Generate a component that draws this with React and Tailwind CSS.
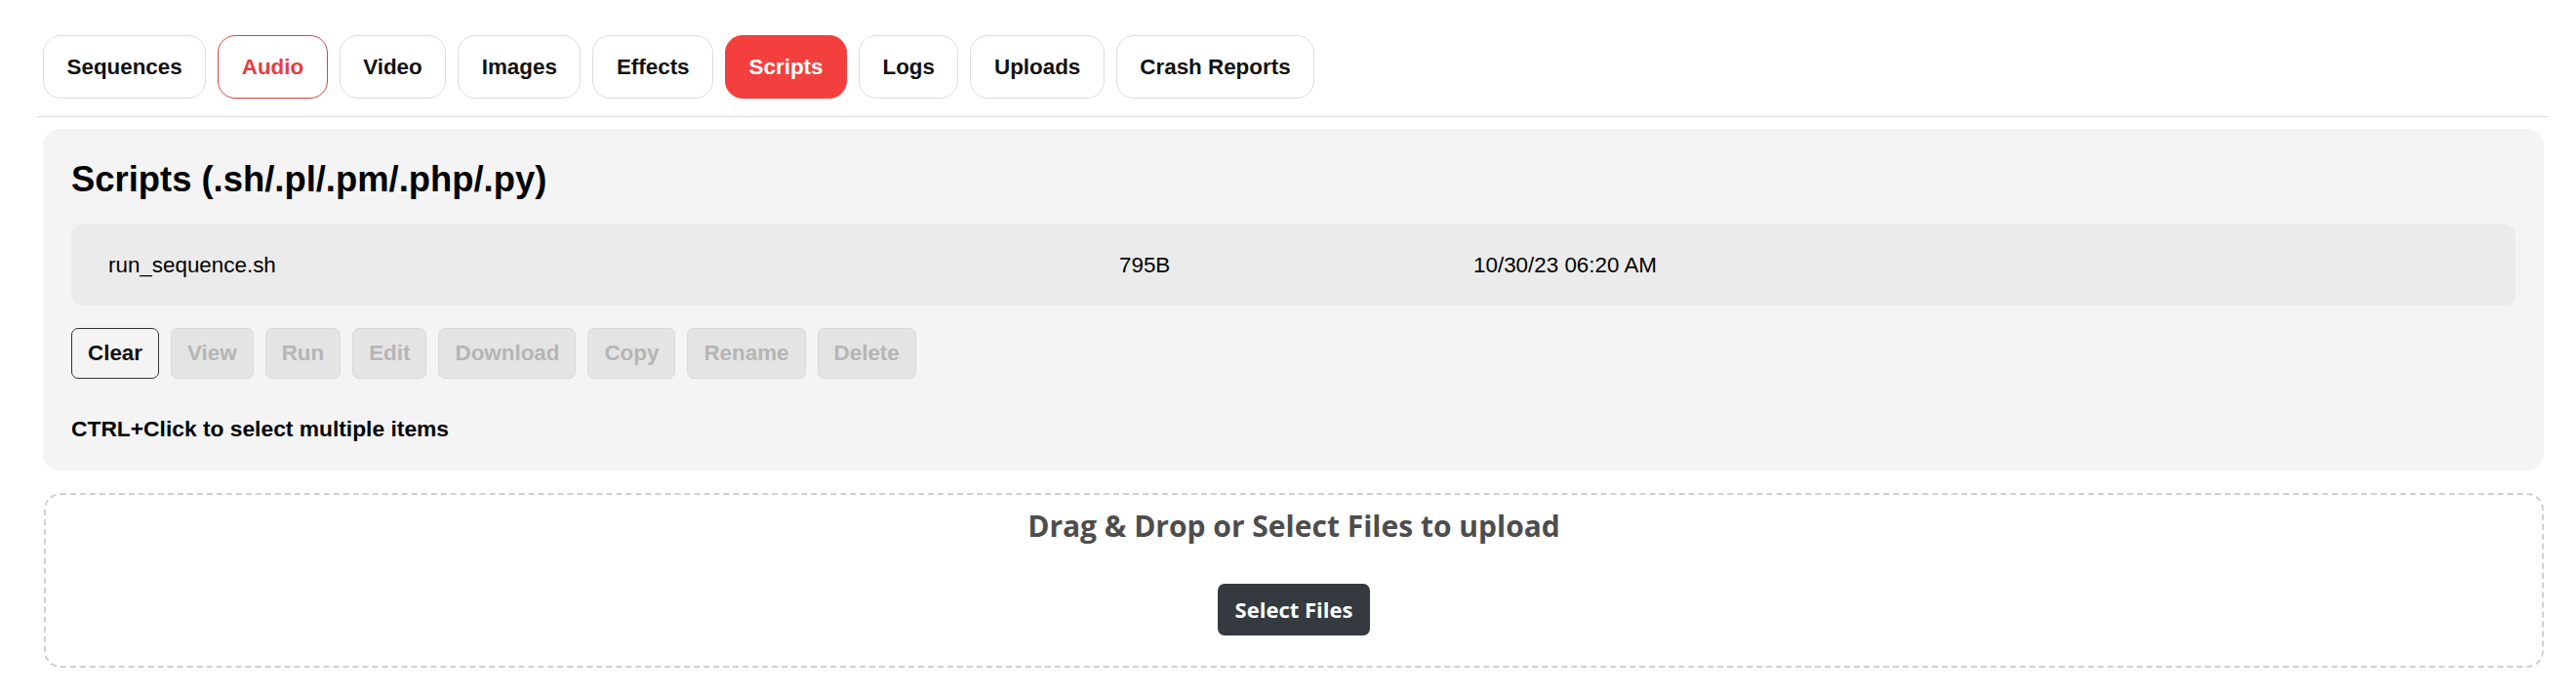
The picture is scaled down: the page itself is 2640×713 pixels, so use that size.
export default function App() {
  const tabs = ["Sequences", "Audio", "Video", "Images", "Effects", "Scripts", "Logs", "Uploads", "Crash Reports"];
  const actions = ["View", "Run", "Edit", "Download", "Copy", "Rename", "Delete"];
  return (
    <div className="w-[2640px] h-[713px] bg-white font-['Liberation_Sans',Arial,sans-serif] text-[#111]">
      <div className="pl-[44px] pr-[33px] pt-[36px]">
        <nav className="-ml-[6px] -mr-[5px] pl-[6px] pb-[18px] border-b border-[#dcdcdc] flex gap-[12px]">
          {tabs.map((t) => {
            let cls = "bg-white border-[#dedede] text-[#111]";
            if (t === "Audio") cls = "bg-white border-[#dc4040] text-[#e53e3e]";
            if (t === "Scripts") cls = "bg-[#f43f3f] border-[#f43f3f] text-white";
            return (
              <div
                key={t}
                className={`h-[65px] px-[23.5px] rounded-[18px] border flex items-center text-[22.4px] font-bold ${cls}`}
              >
                {t}
              </div>
            );
          })}
        </nav>

        <section className="mt-[12px] rounded-[17px] bg-[#f4f4f4] px-[29px] pt-[28px] pb-[29px]">
          <h2 className="text-[36.4px] font-bold leading-[48px] text-black">Scripts (.sh/.pl/.pm/.php/.py)</h2>
          <div className="mt-[22px] h-[83px] rounded-[11px] bg-[#ebebeb] flex items-center pl-[38px] text-[22.4px] text-black">
            <div className="w-[1036px]">run_sequence.sh</div>
            <div className="w-[363px]">795B</div>
            <div>10/30/23 06:20 AM</div>
          </div>
          <div className="mt-[23px] flex gap-[12px]">
            <button className="h-[52px] px-[16px] rounded-[7px] border border-[#333] bg-[#f4f4f4] text-[22.4px] font-bold text-[#111]">
              Clear
            </button>
            {actions.map((a) => (
              <button
                key={a}
                disabled
                className="h-[52px] px-[16px] rounded-[7px] border border-[#d8d8d8] bg-[#e4e4e4] text-[22.4px] font-bold text-[#b5b5b5]"
              >
                {a}
              </button>
            ))}
          </div>
          <p className="mt-[37px] leading-[28px] text-[22.8px] font-bold text-black">CTRL+Click to select multiple items</p>
        </section>

        <div className="mt-[23px] ml-[1px] h-[179px] rounded-[17px] border-2 border-dashed border-[#cfd0d4] flex flex-col items-center pt-[12px]">
          <div className="font-['Open_Sans',sans-serif] font-bold text-[30px] leading-[40px] text-[#4d4d4d]">
            Drag &amp; Drop or Select Files to upload
          </div>
          <button className="mt-[39px] h-[53px] w-[156px] rounded-[7px] bg-[#343a40] text-white font-['Open_Sans',sans-serif] font-bold text-[22px]">
            Select Files
          </button>
        </div>
      </div>
    </div>
  );
}
